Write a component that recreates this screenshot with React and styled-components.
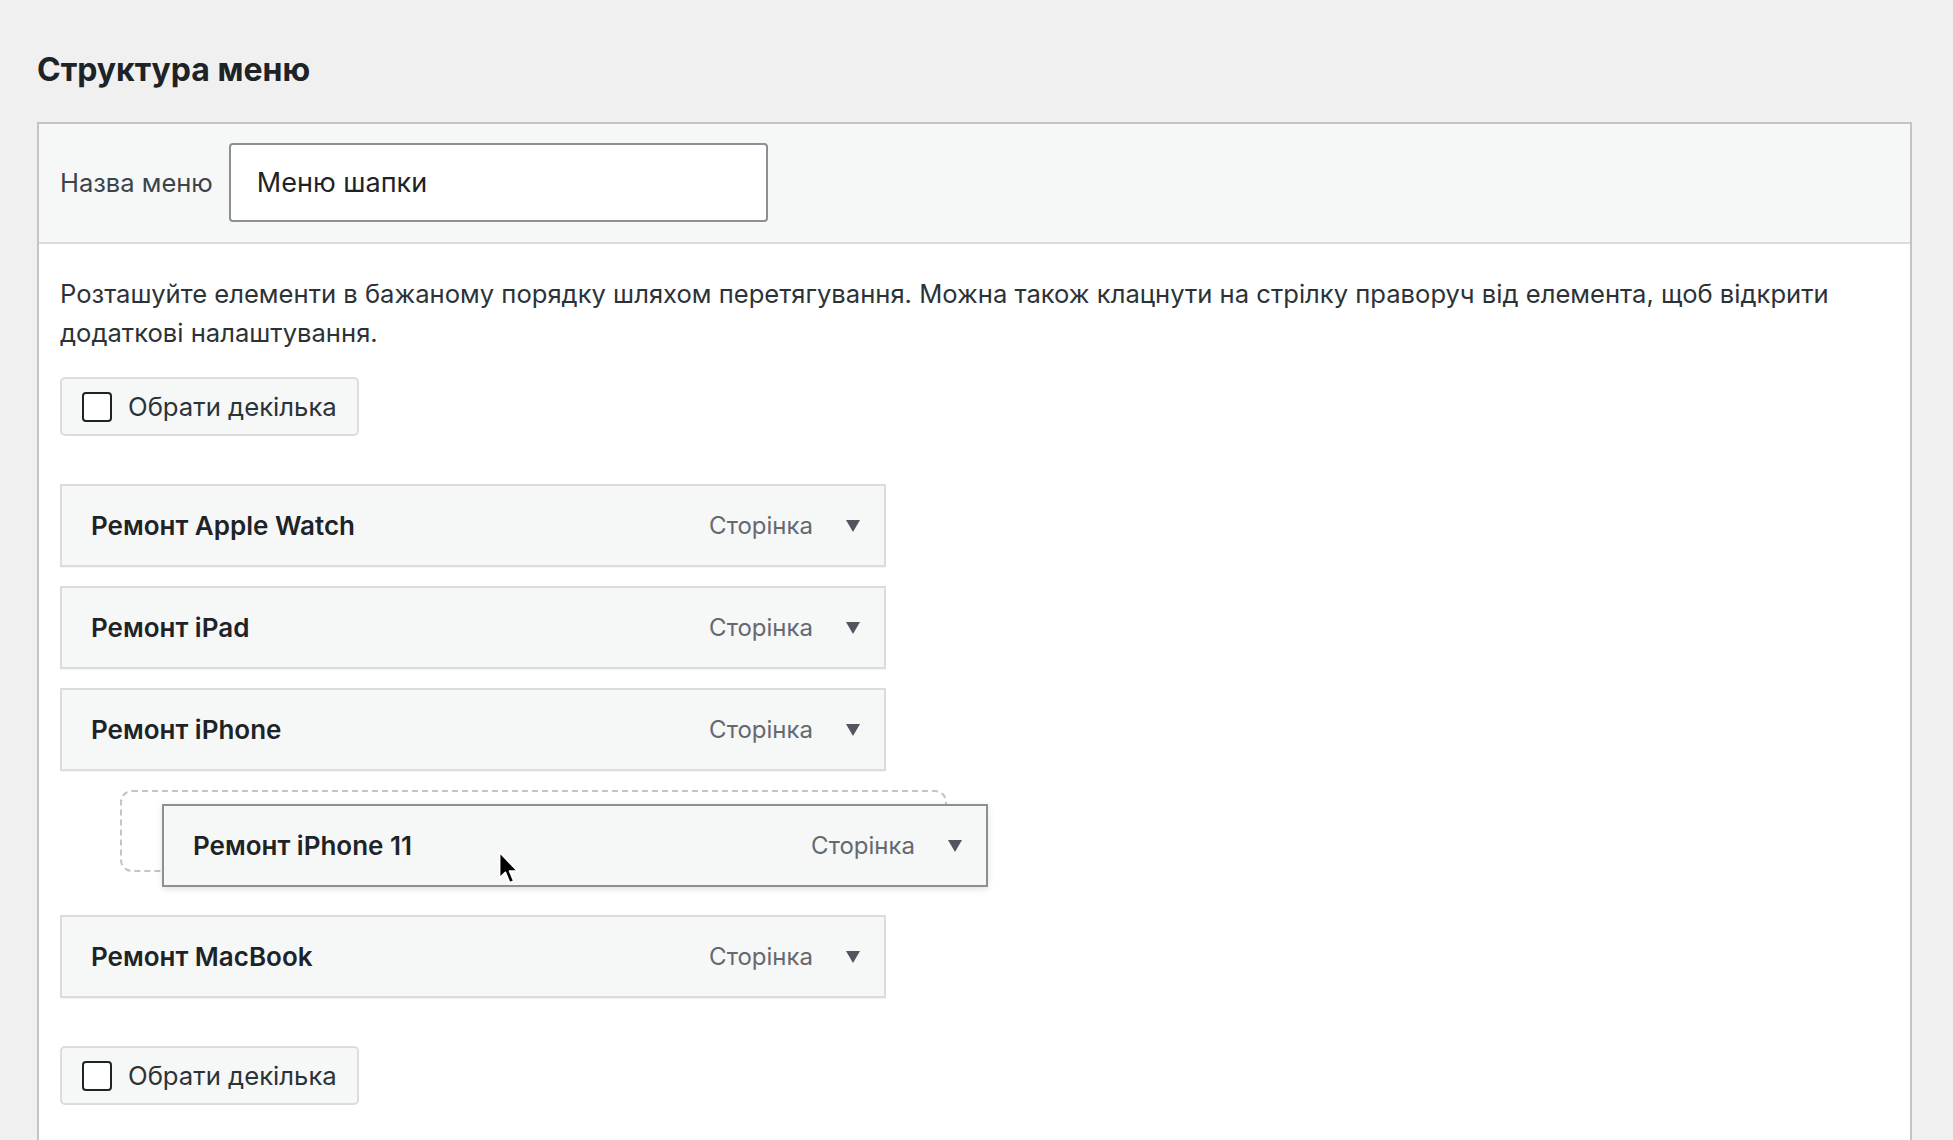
import React from "react";
import styled, {createGlobalStyle} from "styled-components";

const GlobalStyle = createGlobalStyle`
  body {
    margin: 0;
    background: #f0f0f1;
    font-family: Inter, "Noto Sans", sans-serif;
    color: #1d2327;
  }
`;

const Page = styled.div`
  padding: 51px 41px 0 37px;
`;

const Title = styled.h2`
  margin: 0 0 34px;
  font-size: 32px;
  line-height: 37px;
  font-weight: 700;
  color: #1d2327;
`;

const Panel = styled.div`
  border: 2px solid #c3c4c7;
  border-bottom: none;
  background: #fff;
  min-height: 1100px;
`;

const PanelHeader = styled.div`
  display: flex;
  align-items: center;
  gap: 16px;
  padding: 19px 21px 20px;
  background: #f6f7f7;
  border-bottom: 2px solid #dcdcde;
`;

const Label = styled.label`
  font-size: 25.5px;
  color: #3c434a;
`;

const NameInput = styled.input`
  box-sizing: border-box;
  width: 539px;
  height: 79px;
  padding: 0 26px;
  border: 2px solid #8c8f94;
  border-radius: 4px;
  font-family: inherit;
  font-size: 27px;
  color: #1d2327;
  background: #fff;
  outline: none;
`;

const PanelBody = styled.div`
  padding: 31px 21px 0;
`;

const Description = styled.p`
  margin: 0 0 25px;
  font-size: 25.6px;
  line-height: 38.5px;
  color: #2c3338;
`;

const BulkButton = styled.div`
  box-sizing: border-box;
  display: inline-flex;
  align-items: center;
  gap: 16px;
  width: 299px;
  height: 59px;
  padding: 0 20px;
  background: #f6f7f7;
  border: 2px solid #dcdcde;
  border-radius: 5px;
  font-size: 25.7px;
  color: #2c3338;
`;

const CheckBox = styled.span`
  box-sizing: border-box;
  width: 30px;
  height: 30px;
  border: 2px solid #1d2327;
  border-radius: 4px;
  background: #fff;
`;

const List = styled.div`
  display: flex;
  flex-direction: column;
  gap: 19px;
  margin: 48px 0 48px;
`;

const ItemBar = styled.div`
  box-sizing: border-box;
  display: flex;
  align-items: center;
  width: 826px;
  height: 83px;
  padding: 0 24px 0 29px;
  background: #f6f7f7;
  border: 2px solid ${props => props.dragging ? '#8c8f94' : '#dcdcde'};
  box-shadow: ${props => props.dragging ? '0 2px 6px rgba(0, 0, 0, .12)' : '0 1px 1px rgba(0, 0, 0, .04)'};
  position: relative;
`;

const ItemTitle = styled.span`
  flex: 1;
  font-size: 26px;
  font-weight: 600;
  color: #1d2327;
`;

const ItemType = styled.span`
  font-size: 24px;
  color: #646970;
  margin-right: 33px;
`;

const Arrow = styled.span`
  width: 0;
  height: 0;
  border-left: 7px solid transparent;
  border-right: 7px solid transparent;
  border-top: 12px solid #50575e;
`;

const Placeholder = styled.div`
  box-sizing: border-box;
  position: relative;
  width: 827px;
  height: 82px;
  margin: 0 0 24px 60px;
  border: 2px dashed #c3c4c7;
  border-radius: 12px;
`;

const Dragged = styled.div`
  position: absolute;
  left: 40px;
  top: 12px;
`;

const Cursor = styled.svg`
  position: absolute;
  left: 334px;
  top: 45px;
`;

const items = [
  {title: 'Ремонт Apple Watch'},
  {title: 'Ремонт iPad'},
  {title: 'Ремонт iPhone'},
  {title: 'Ремонт iPhone 11', dragging: true},
  {title: 'Ремонт MacBook'},
];

function MenuItem({title, dragging}) {
  return (
    <ItemBar dragging={dragging}>
      <ItemTitle>{title}</ItemTitle>
      <ItemType>Сторінка</ItemType>
      <Arrow/>
      {dragging ? (
        <Cursor width="22" height="34" viewBox="0 0 17 27">
          <path d="M1 1 L1 21.5 L5.6 17 L9 25.2 L12.3 23.8 L9 16 L15.4 16 Z"
                fill="#000" stroke="#fff" strokeWidth="1.4" strokeLinejoin="round"/>
        </Cursor>
      ) : false}
    </ItemBar>
  );
}

export default function App() {
  return (
    <Page>
      <GlobalStyle/>
      <Title>Структура меню</Title>
      <Panel>
        <PanelHeader>
          <Label>Назва меню</Label>
          <NameInput defaultValue="Меню шапки"/>
        </PanelHeader>
        <PanelBody>
          <Description>
            Розташуйте елементи в бажаному порядку шляхом перетягування. Можна також клацнути на стрілку праворуч від елемента, щоб відкрити додаткові налаштування.
          </Description>
          <BulkButton>
            <CheckBox/>
            Обрати декілька
          </BulkButton>
          <List>
            {items.map(item => item.dragging ? (
              <Placeholder key={item.title}>
                <Dragged>
                  <MenuItem {...item}/>
                </Dragged>
              </Placeholder>
            ) : (
              <MenuItem key={item.title} {...item}/>
            ))}
          </List>
          <BulkButton>
            <CheckBox/>
            Обрати декілька
          </BulkButton>
        </PanelBody>
      </Panel>
    </Page>
  );
}
